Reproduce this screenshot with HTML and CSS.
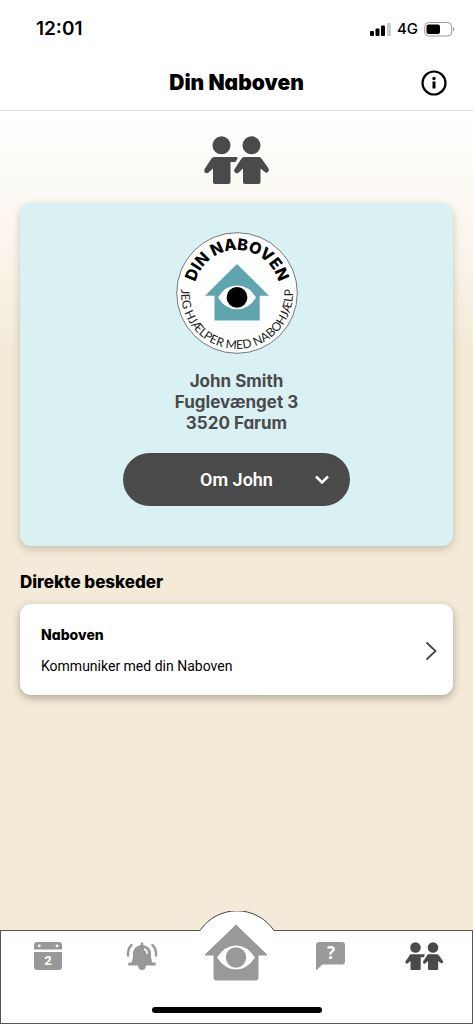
FILE: index.html
```html
<!DOCTYPE html>
<html lang="da">
<head>
<meta charset="utf-8">
<meta name="viewport" content="width=device-width, initial-scale=1">
<title>Din Naboven</title>
<link rel="stylesheet" href="styles.css">
</head>
<body>
<svg class="defs" aria-hidden="true">
  <symbol id="people" viewBox="0 0 66 48">
    <circle cx="17.5" cy="9.3" r="9"/>
    <circle cx="47.5" cy="9.3" r="9"/>
    <path d="M10 21H32Q34.500 21 33 23.500L31.500 26H26.500V46Q26.500 48 24.500 48H11Q9 48 9 46V32.500L4.600 36.500Q2.500 38 1 36.500Q-.5 34.800.8 32.800L7.500 22.500Q8.500 21 10 21Z"/>
    <path d="M40 21H55Q56.500 21 57.500 22.500L64.500 32.500Q65.500 34.500 64 36Q62.500 37.300 60.800 36L56.500 32.500V46Q56.500 48 54.500 48H41Q39 48 39 46V32.500L34.500 36.700Q32.500 38 31 36.500Q29.500 34.800 30.800 32.800L37.500 22.500Q38.500 21 40 21Z"/>
  </symbol>
</svg>
<div class="app">
  <header class="top">
    <div class="status">
      <span class="time">12:01</span>
      <span class="signals">
        <svg width="22" height="14" viewBox="0 0 22 14" aria-hidden="true">
          <rect x="1" y="9" width="4" height="5" rx="1"/><rect x="6.500" y="6.500" width="4" height="7.500" rx="1"/><rect x="12" y="3.500" width="4" height="10.500" rx="1"/><rect x="18" y="1" width="4" height="13" rx="1" fill="#ccc"/>
        </svg>
        <span class="network">4G</span>
        <svg width="31" height="16" viewBox="0 0 31 16" aria-hidden="true">
          <rect x=".7" y="1.500" width="27" height="13.500" rx="4" fill="none" stroke="#999"/><rect x="2.500" y="3.500" width="13.500" height="9.500" rx="2"/><path d="M29 6Q31.500 8 29 10.500Z" fill="#999"/>
        </svg>
      </span>
    </div>
    <div class="titlebar">
      <h1>Din Naboven</h1>
      <button class="info" type="button" aria-label="Information">
        <svg width="26" height="26" viewBox="0 0 26 26" aria-hidden="true">
          <circle cx="13" cy="13" r="11.500" fill="none" stroke="#000" stroke-width="2.200"/><circle cx="13" cy="8.500" r="1.700"/><path d="M11.500 11.500H14.500V18.500H11.500Z"/>
        </svg>
      </button>
    </div>
  </header>

  <main class="content">
    <svg class="people" aria-hidden="true"><use href="#people"/></svg>
    <section class="profile">
      <svg class="badge" viewBox="-61 -61 122 122" role="img" aria-label="Din Naboven">
        <circle r="60.300" fill="#fff" stroke="#555" stroke-width=".8"/>
        <path id="upper" d="M-43 0A43 43 0 0 1 43 0" fill="none"/>
        <path id="lower" d="M-54.700 -12A56 56 0 1 0 54.700 -12" fill="none"/>
        <text class="badge-name" text-anchor="middle"><textPath href="#upper" startOffset="50%">DIN NABOVEN</textPath></text>
        <text class="badge-motto" text-anchor="middle"><textPath href="#lower" startOffset="50%">JEG HJÆLPER MED NABOHJÆLP</textPath></text>
        <path d="M0 -29L32 2.700H22.700V27.500H-22.500V2.700H-32Z" fill="#5fa5ae"/>
        <path d="M-19 4.500Q-12 -7.500 0 -7.500T19 4.500Q12 16.300 0 16.300T-19 4.500Z" fill="#fff"/>
        <circle cy="4.400" r="10.400"/>
      </svg>
      <address>John Smith<br>Fuglevænget 3<br>3520 Farum</address>
      <button class="about" type="button">
        <span>Om John</span>
        <svg width="16" height="12" viewBox="0 0 16 12" aria-hidden="true"><path d="M2 2.500L8 8.500L14 2.500" fill="none" stroke="#fff" stroke-width="2.500"/></svg>
      </button>
    </section>
    <h2>Direkte beskeder</h2>
    <a class="message" href="#naboven">
      <span class="message-text">
        <strong>Naboven</strong>
        <span>Kommuniker med din Naboven</span>
      </span>
      <svg width="12" height="20" viewBox="0 0 12 20" aria-hidden="true"><path d="M1.500 1.500L10.500 10L1.500 18.500" fill="none" stroke="#444" stroke-width="1.800"/></svg>
    </a>
  </main>

  <nav class="tabs" aria-label="Menu">
    <svg class="bump" viewBox="0 0 76 22" aria-hidden="true"><path d="M1 19.500A44.600 44.600 0 0 1 75 19.500V22H1Z" fill="#fff"/><path d="M0 19.500H1A44.600 44.600 0 0 1 75 19.500H76" fill="none" stroke="#444"/></svg>
    <div class="tab-list">
      <a href="#kalender" aria-label="Kalender">
        <svg width="28" height="28" viewBox="0 0 28 28" aria-hidden="true">
          <path d="M3 0H25Q28 0 28 3V7.500H0V3Q0 0 3 0Z"/><path d="M0 10H28V25Q28 28 25 28H3Q0 28 0 25Z"/>
          <circle cx="5.300" cy="3.800" r="1.400" fill="#fff"/><circle cx="23" cy="3.800" r="1.400" fill="#fff"/>
          <text class="glyph-day" x="14" y="23" text-anchor="middle">2</text>
        </svg>
      </a>
      <a href="#alarmer" aria-label="Alarmer">
        <svg width="32" height="28" viewBox="0 0 32 28" aria-hidden="true">
          <path d="M14.800 3V1.500Q14.800 0 16 0T17.200 1.500V3Q25 4.500 25 12Q25 18 26.500 20.500H28.500Q30 20.500 30 22T28.500 23.500H20Q19.500 28 16 28T12 23.500H3.500Q2 23.500 2 22T3.500 20.500H5.500Q7 18 7 12Q7 4.500 14.800 3Z"/>
          <path d="M5.500 3.200Q1.500 7 2 13.500M26.500 3.200Q30.500 7 30 13.500" fill="none" stroke="#999" stroke-width="2.500" stroke-linecap="round"/>
          <path d="M18.800 7.300Q21 8.500 21 11" fill="none" stroke="#fff" stroke-width="1.800" stroke-linecap="round"/>
        </svg>
      </a>
      <a class="home" href="#hjem" aria-label="Hjem">
        <svg width="64" height="57" viewBox="0 0 64 57" aria-hidden="true">
          <path d="M32 1L63 31H54V54Q54 56 52 56H12Q10 56 10 54V31H1Z" stroke="#999" stroke-linejoin="round"/>
          <path d="M13 33.500Q21 21.500 32 21.500T51 33.500Q43 45.500 32 45.500T13 33.500Z" fill="#fff"/><circle cx="32" cy="33.500" r="10.200"/>
        </svg>
      </a>
      <a href="#hjaelp" aria-label="Hjælp">
        <svg width="29" height="29" viewBox="0 0 29 29" aria-hidden="true">
          <path d="M3 0H26Q29 0 29 3V19.500Q29 22.500 26 22.500H6.500L0 28.500V3Q0 0 3 0Z"/>
          <text class="glyph-help" x="15" y="17" text-anchor="middle">?</text>
        </svg>
      </a>
      <a class="active" href="#naboven" aria-label="Din Naboven" aria-current="page">
        <svg width="39" height="28" aria-hidden="true"><use href="#people"/></svg>
      </a>
    </div>
    <div class="indicator"></div>
  </nav>
</div>
</body>
</html>
```

FILE: styles.css
```css
* { box-sizing: border-box; }
body {
  margin: 0;
  font-family: Roboto, "Liberation Sans", sans-serif;
  color: #000;
}
svg { display: block; }
button { border: 0; padding: 0; font: inherit; background: none; cursor: pointer; }
a { color: inherit; text-decoration: none; }
h1, h2, address, .message strong {
  margin: 0;
  font-family: Inter, sans-serif;
  font-feature-settings: "cv11";
  font-style: normal;
}
.defs { position: absolute; width: 0; height: 0; }
.app { min-height: 100vh; display: flex; flex-direction: column; }

.top { background: #fff; border-bottom: 1px solid #e1e1e1; }
.status {
  height: 57px;
  padding: 0 18px 0 36px;
  display: flex;
  align-items: center;
  justify-content: space-between;
  font-family: Inter, sans-serif;
}
.time { font-size: 19px; font-weight: 600; }
.signals { display: flex; align-items: center; gap: 6px; }
.network { font-size: 15px; font-weight: 500; }
.titlebar {
  height: 53px;
  padding: 0 26px 2px;
  display: grid;
  grid-template-columns: 26px 1fr 26px;
  align-items: center;
}
h1 { grid-column: 2; text-align: center; font-size: 21px; font-weight: 900; }

.content {
  flex: 1;
  padding: 25px 20px 40px;
  background: linear-gradient(#fff, #fbf7ef 120px, #f3ead7 240px, #f4ead8);
}
.people { width: 66px; height: 48px; margin: 0 auto 19px; fill: #4a4a4a; }
.profile {
  padding: 29px 20px 40px;
  display: flex;
  flex-direction: column;
  align-items: center;
  border-radius: 11px;
  background: #daf1f4;
  box-shadow: 0 3px 8px rgba(70, 60, 40, .25);
}
.badge { width: 122px; height: 122px; }
.badge-name { font: 800 16px Inter, sans-serif; }
.badge-motto { font: 400 12px Lato, sans-serif; fill: #222; }
address {
  margin: 17px 0 19px;
  text-align: center;
  font-size: 17px;
  line-height: 21px;
  font-weight: 700;
  color: #4a4a4a;
}
.about {
  width: 227px;
  max-width: 100%;
  height: 53px;
  padding: 0 20px;
  display: grid;
  grid-template-columns: 16px 1fr 16px;
  align-items: center;
  border-radius: 27px;
  background: #4a4a4a;
  color: #fff;
  font-size: 18px;
  font-weight: 600;
}
.about span { grid-column: 2; }
h2 { margin: 25px 0 11px; font-size: 17px; line-height: 22px; font-weight: 800; }
.message {
  padding: 21px 16px 19px 21px;
  display: flex;
  align-items: center;
  justify-content: space-between;
  border-radius: 11px;
  background: #fff;
  box-shadow: 0 3px 8px rgba(70, 60, 40, .4);
}
.message-text { display: grid; gap: 11px; font-size: 14px; line-height: 20px; }
.message strong { font-weight: 800; }

.tabs {
  position: relative;
  height: 94px;
  display: flex;
  flex-direction: column;
  justify-content: space-between;
  align-items: center;
  border: 1px solid #555;
  background: #fff;
}
.bump { position: absolute; top: -20px; left: calc(50% - 38px); width: 76px; height: 22px; }
.tab-list { position: relative; width: 100%; display: grid; grid-template-columns: repeat(5, 1fr); fill: #999; }
.tab-list a { height: 50px; padding-top: 11px; display: flex; justify-content: center; align-items: flex-start; }
.tab-list .home { padding: 0; margin-top: -7px; height: 57px; }
.tab-list .active { fill: #4a4a4a; }
.glyph-day { font: 700 13px Roboto, sans-serif; fill: #fff; }
.glyph-help { font: 700 17px "Open Sans", sans-serif; fill: #fff; }
.indicator { width: 170px; height: 6px; margin-bottom: 10px; border-radius: 3px; background: #000; }
```
